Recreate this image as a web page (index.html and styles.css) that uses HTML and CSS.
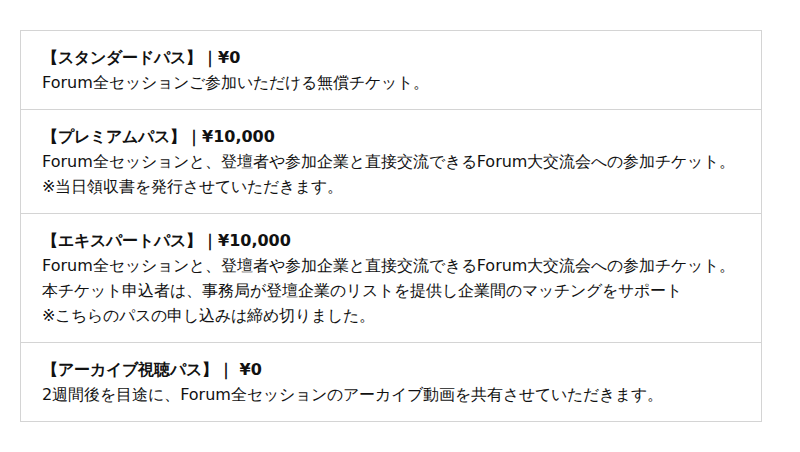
FILE: index.html
```html
<!DOCTYPE html>
<html>
<head>
<meta charset="utf-8">
<link rel="stylesheet" href="styles.css">
</head>
<body>
<div class="wrap">
  <ul class="passes">
    <li class="pass">
      <p class="title">【スタンダードパス】｜¥0</p>
      <p>Forum全セッションご参加いただける無償チケット。</p>
    </li>
    <li class="pass">
      <p class="title">【プレミアムパス】｜¥10,000</p>
      <p>Forum全セッションと、登壇者や参加企業と直接交流できるForum大交流会への参加チケット。</p>
      <p>※当日領収書を発行させていただきます。</p>
    </li>
    <li class="pass">
      <p class="title">【エキスパートパス】｜¥10,000</p>
      <p>Forum全セッションと、登壇者や参加企業と直接交流できるForum大交流会への参加チケット。</p>
      <p>本チケット申込者は、事務局が登壇企業のリストを提供し企業間のマッチングをサポート</p>
      <p>※こちらのパスの申し込みは締め切りました。</p>
    </li>
    <li class="pass">
      <p class="title">【アーカイブ視聴パス】｜ ¥0</p>
      <p>2週間後を目途に、Forum全セッションのアーカイブ動画を共有させていただきます。</p>
    </li>
  </ul>
</div>
</body>
</html>
```
FILE: styles.css
```css
html, body {
  margin: 0;
  padding: 0;
  background: #ffffff;
}
body {
  font-family: "DejaVu Sans", sans-serif;
  font-size: 16px;
  line-height: 25px;
  color: #111111;
}
.wrap {
  padding: 30px 0 0 20px;
}
.passes {
  list-style: none;
  margin: 0;
  padding: 0;
  width: 740px;
  border: 1px solid #d4d4d4;
}
.pass {
  padding: 14px 20px 14px 21px;
  border-bottom: 1px solid #d4d4d4;
}
.pass:last-child {
  border-bottom: none;
}
.pass p {
  margin: 0;
  white-space: nowrap;
}
.pass .title {
  font-weight: bold;
}
```
